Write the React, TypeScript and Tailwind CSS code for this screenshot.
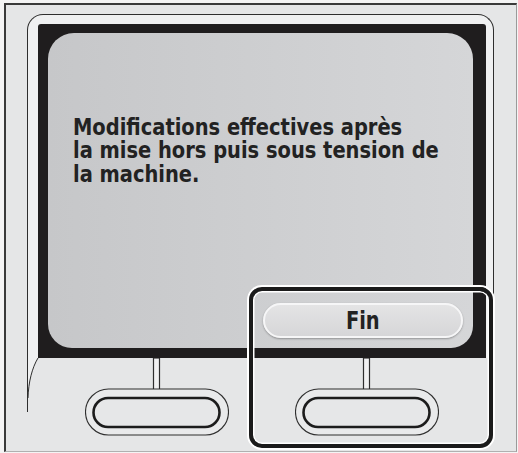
const textFont = { fontFamily: '"Liberation Sans Narrow", "DejaVu Sans Condensed", "Liberation Sans", sans-serif' }

function HardKey() {
  return (
    <svg width="144" height="78" viewBox="0 0 144 78" className="shrink-0">
      <rect x="68.5" y="0" width="6" height="32" fill="#f1f1f2" stroke="#2f2f2f" strokeWidth="1.2" />
      <rect x="0.5" y="31" width="143" height="46" rx="23" fill="#e9eaeb" stroke="#2f2f2f" strokeWidth="1.1" />
      <rect x="8.5" y="40" width="126" height="29" rx="14.5" fill="#e6e7e8" stroke="#1c1c1c" strokeWidth="2.6" />
    </svg>
  )
}

export default function App() {
  return (
    <div className="h-[453px] w-[518px] bg-[#f4f4f4] pb-[1px] pl-[4px] pr-[1px] pt-[3px]">
      <div className="relative h-full w-full border-b border-l-2 border-r border-t-2 border-b-[#b0b0b0] border-l-[#3a3a3a] border-r-[#9a9a9a] border-t-[#3a3a3a] bg-[#e5e6e7]">
        <div className="ml-[21px] mt-[9px] w-[467px] rounded-t-[16px] border-x border-t border-[#2e2e2e] bg-[#eff0f1] pl-[10px] pr-[7px] pt-[9px]">
          <div className="h-[334px] w-[448px] rounded-t-[3px] bg-[#1f1d1e] pb-[10px] pl-[10px] pr-[13px] pt-[9px]">
            <div className="flex h-full w-full flex-col rounded-[26px_26px_22px_24px] bg-gradient-to-r from-[#c6c7c9] to-[#d5d6d8]">
              <div className="pl-[25px] pt-[83px] text-[23px] font-bold leading-[23.4px] text-[#222]" style={textFont}>
                <p className="origin-left scale-x-[0.94] whitespace-nowrap">Modifications effectives après</p>
                <p className="origin-left scale-x-[0.94] whitespace-nowrap">la mise hors puis sous tension de</p>
                <p className="origin-left scale-x-[0.94] whitespace-nowrap">la machine.</p>
              </div>
              <div className="mt-auto flex justify-end pb-[10px] pr-[10px]">
                <button
                  type="button"
                  className="flex h-[35px] w-[200px] items-center justify-center rounded-full border-2 border-[#f6f6f7] bg-gradient-to-b from-[#e4e4e5] to-[#d6d6d8] text-[24px] font-bold text-[#222] shadow-[0_1px_2px_rgba(0,0,0,0.3)]"
                  style={textFont}
                >
                  <span className="inline-block scale-x-[0.9]">Fin</span>
                </button>
              </div>
            </div>
          </div>
        </div>
        <div className="ml-[21px] flex h-[78px] w-[467px] items-start">
          <svg width="12" height="54" viewBox="0 0 12 54" className="shrink-0">
            <path d="M0 0 H11 C5 10 1.5 24 1 40 V0 Z" fill="#eff0f1" />
            <path d="M11 0 C5 10 1.5 24 1 40" fill="none" stroke="#2e2e2e" strokeWidth="1" />
            <line x1="0.5" y1="0" x2="0.5" y2="54" stroke="#2e2e2e" strokeWidth="1" />
          </svg>
          <div className="ml-[46px]">
            <HardKey />
          </div>
          <div className="ml-[66px]">
            <HardKey />
          </div>
        </div>
        <div className="absolute left-[243px] top-[282px] h-[161px] w-[244px] rounded-[13px] border-4 border-[#1b1b1b] shadow-[inset_0_0_0_1.5px_#ffffff] ring-2 ring-white" />
      </div>
    </div>
  )
}
